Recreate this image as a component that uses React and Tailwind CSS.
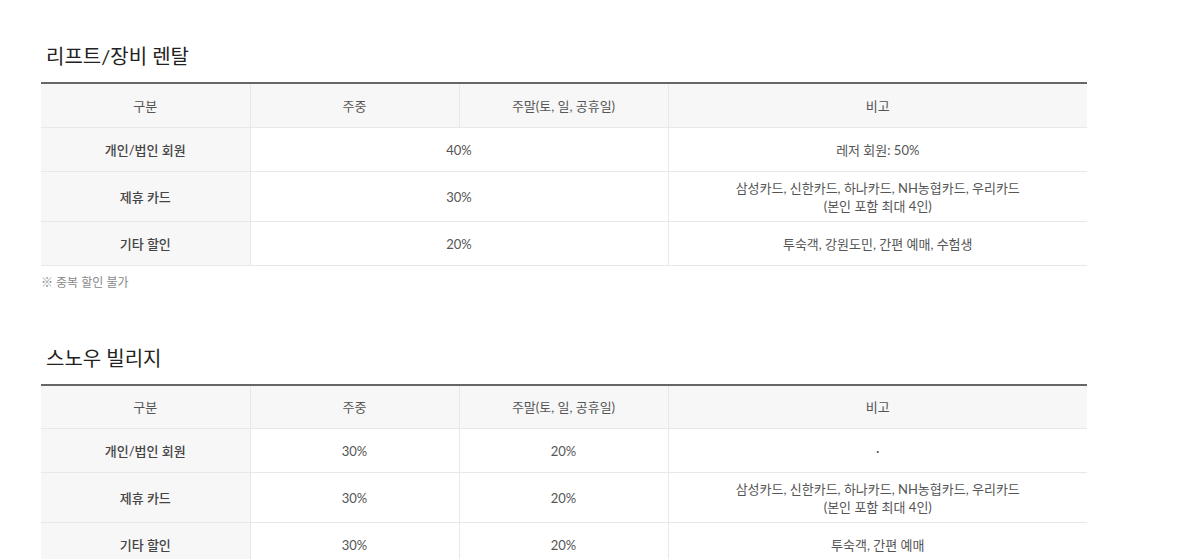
import React from 'react';

const font = { fontFamily: '"Lato", "Noto Sans CJK KR", sans-serif' };

const sections = [
  {
    title: '리프트/장비 렌탈',
    rows: [
      { label: '개인/법인 회원', merged: '40%', note: ['레저 회원: 50%'] },
      { label: '제휴 카드', merged: '30%', note: ['삼성카드, 신한카드, 하나카드, NH농협카드, 우리카드', '(본인 포함 최대 4인)'] },
      { label: '기타 할인', merged: '20%', note: ['투숙객, 강원도민, 간편 예매, 수험생'] },
    ],
    footnote: '※ 중복 할인 불가',
  },
  {
    title: '스노우 빌리지',
    rows: [
      { label: '개인/법인 회원', weekday: '30%', weekend: '20%', note: ['·'] },
      { label: '제휴 카드', weekday: '30%', weekend: '20%', note: ['삼성카드, 신한카드, 하나카드, NH농협카드, 우리카드', '(본인 포함 최대 4인)'] },
      { label: '기타 할인', weekday: '30%', weekend: '20%', note: ['투숙객, 간편 예매'] },
    ],
  },
];

const cell = 'border-r border-b border-[#e8e8e8] text-center align-middle pt-[7px] pb-[6px] leading-[18px]';

const PriceTable = ({ section }) => (
  <div>
    <h2 className="pl-[5px] text-[20px] leading-[28px] text-[#222] mb-[12px]">{section.title}</h2>
    <table className="w-[1046px] border-collapse border-t-2 border-[#666] table-fixed text-[13px] text-[#555]">
      <colgroup>
        <col className="w-[209px]" />
        <col className="w-[209px]" />
        <col className="w-[209px]" />
        <col className="w-[419px]" />
      </colgroup>
      <thead>
        <tr className="h-[44px] bg-[#f7f7f7]">
          <th className={`${cell} font-normal`}>구분</th>
          <th className={`${cell} font-normal`}>주중</th>
          <th className={`${cell} font-normal`}>주말(토, 일, 공휴일)</th>
          <th className={`${cell} font-normal border-r-0`}>비고</th>
        </tr>
      </thead>
      <tbody>
        {section.rows.map((row, i) => (
          <tr key={i} className="h-[44px]">
            <td className={`${cell} bg-[#f7f7f7] text-[#444] font-medium`}>{row.label}</td>
            {row.merged ? (
              <td colSpan={2} className={cell}>{row.merged}</td>
            ) : (
              <>
                <td className={cell}>{row.weekday}</td>
                <td className={cell}>{row.weekend}</td>
              </>
            )}
            <td className={`${cell} border-r-0`}>
              {row.note.map((line, j) => (
                <div key={j}>{line}</div>
              ))}
            </td>
          </tr>
        ))}
      </tbody>
    </table>
    {section.footnote && (
      <p className="mt-[8px] text-[12px] leading-[18px] text-[#888]">{section.footnote}</p>
    )}
  </div>
);

export default function App() {
  return (
    <div className="bg-white min-h-screen pl-[41px] pt-[42px]" style={font}>
      <div className="flex flex-col gap-[52px]">
        {sections.map((s, i) => (
          <PriceTable key={i} section={s} />
        ))}
      </div>
    </div>
  );
}
